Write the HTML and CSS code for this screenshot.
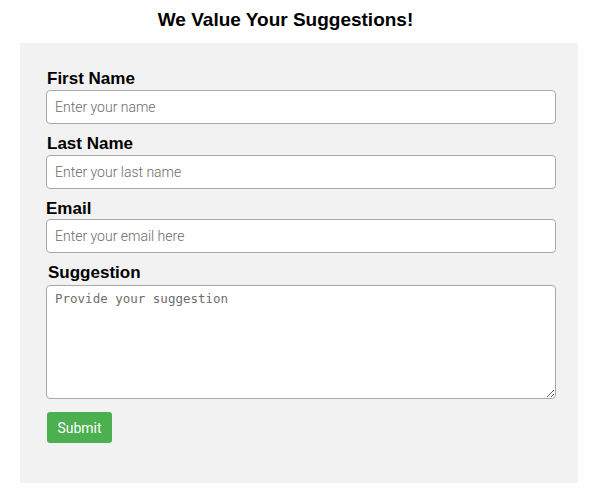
FILE: index.html
```html
<!DOCTYPE html>
<html>
<head>
<meta charset="utf-8">
<link rel="stylesheet" href="styles.css">
</head>
<body>
<h1 class="title">We Value Your Suggestions!</h1>
<form class="card">
  <div class="field">
    <label class="label" for="fn">First Name</label>
    <input class="input" id="fn" type="text" placeholder="Enter your name">
  </div>
  <div class="field">
    <label class="label" for="ln">Last Name</label>
    <input class="input" id="ln" type="text" placeholder="Enter your last name">
  </div>
  <div class="field">
    <label class="label label-tight" for="em">Email</label>
    <input class="input" id="em" type="email" placeholder="Enter your email here">
  </div>
  <div class="field field-sugg">
    <label class="label label-sugg" for="sg">Suggestion</label>
    <textarea class="textarea" id="sg" placeholder="Provide your suggestion"></textarea>
  </div>
  <button class="submit" type="button">Submit</button>
</form>
</body>
</html>
```

FILE: styles.css
```css
* { box-sizing: border-box; }
body {
  margin: 0;
  padding: 0 22px 0 20px;
  font-family: "Liberation Sans", Arial, sans-serif;
  background: #fff;
}
.title {
  margin: 0;
  padding-top: 9px;
  padding-right: 27px;
  height: 43px;
  text-align: center;
  font-size: 19px;
  font-weight: bold;
  color: #000;
}
.card {
  background: #f2f2f2;
  padding: 26px 23px 40px 26px;
  display: flex;
  flex-direction: column;
  height: 440px;
}
.field {
  display: flex;
  flex-direction: column;
  margin-bottom: 10px;
}
.field-sugg { margin-bottom: 13px; }
.label {
  font-size: 17px;
  font-weight: bold;
  color: #000;
  line-height: 20px;
  margin-left: 1px;
  margin-bottom: 1px;
}
.label-tight { margin-left: 0; margin-bottom: 0; }
.label-sugg { margin-left: 2px; margin-bottom: 2px; }
.input, .textarea {
  width: 510px;
  border: 1px solid #a9a9a9;
  border-radius: 4px;
  background: #fff;
  outline: none;
}
.input {
  height: 34px;
  padding: 0 8px;
  font-family: Roboto, "Liberation Sans", sans-serif;
  font-size: 14px;
  font-weight: 300;
}
.input::placeholder { color: #6b6b6b; }
.textarea {
  height: 114px;
  padding: 5px 8px;
  font-family: "DejaVu Sans Mono", monospace;
  font-size: 12.5px;
  resize: vertical;
}
.textarea::placeholder { color: #6e6e6e; }
.submit {
  align-self: flex-start;
  margin-left: 1px;
  width: 65px;
  height: 31px;
  background: #4caf50;
  color: #fff;
  border: none;
  border-radius: 3px;
  font-family: Roboto, "Liberation Sans", sans-serif;
  font-size: 14px;
  padding: 0;
}
```
